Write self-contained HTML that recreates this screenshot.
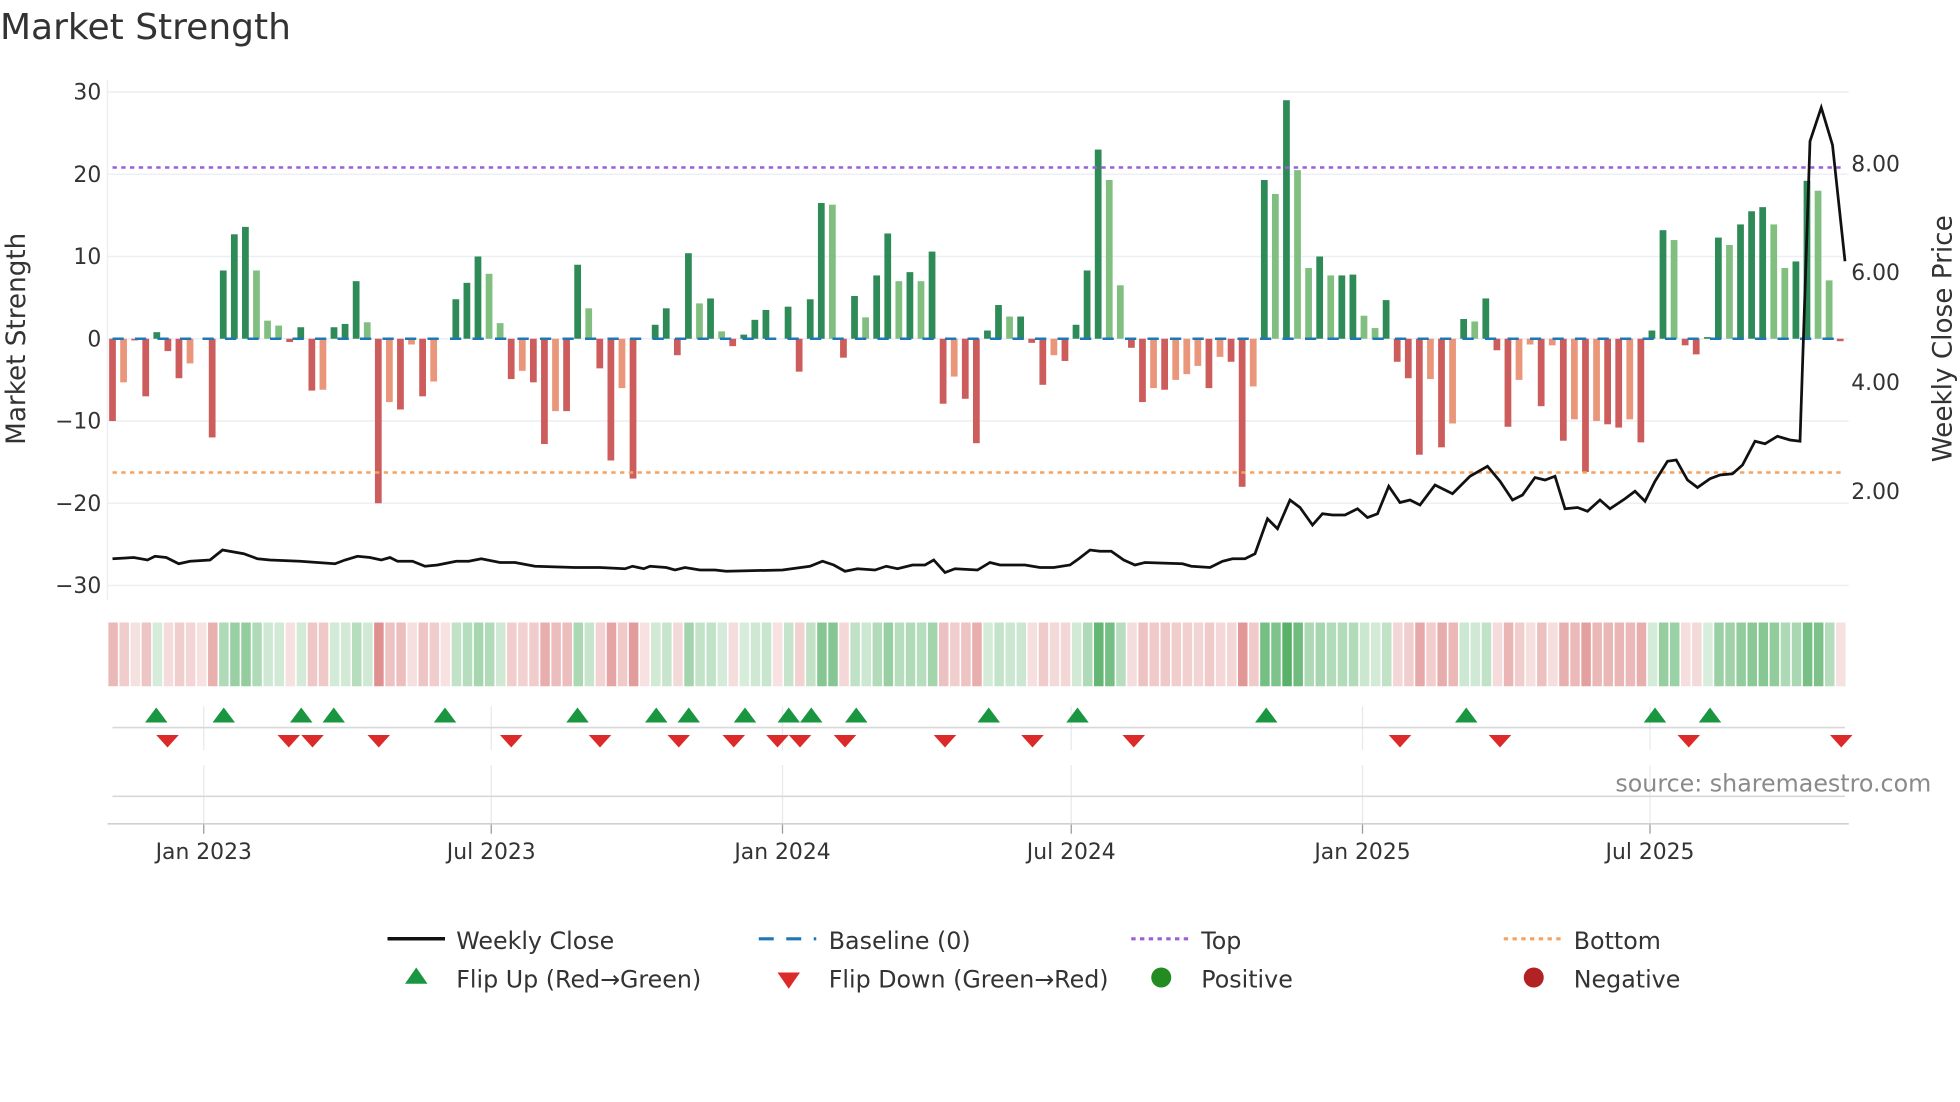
<!DOCTYPE html>
<html><head><meta charset="utf-8"><style>
html,body{margin:0;padding:0;background:#fff;overflow:hidden}
svg{display:block}
text{font-family:"DejaVu Sans","Liberation Sans",sans-serif;fill:#333}
</style></head><body>
<svg id="s" width="1960" height="1102" viewBox="0 0 1568 881.6" xmlns="http://www.w3.org/2000/svg">
<rect width="1568" height="882" fill="#fff"/>
<text x="0" y="31" font-size="28.8">Market Strength</text>
<g id="grid"></g>
<g id="bars"></g>
<g id="heat"></g>
<g id="tri"></g>
<g id="lab" font-size="17.5"></g>
<text transform="translate(20,271) rotate(-90)" text-anchor="middle" font-size="21">Market Strength</text>
<text transform="translate(1561,271) rotate(-90)" text-anchor="middle" font-size="21">Weekly Close Price</text>
<text x="1545" y="633" text-anchor="end" font-size="19" style="fill:#8a8a8a">source: sharemaestro.com</text>
<g font-size="19">
<line x1="310" y1="751" x2="356" y2="751" stroke="#111" stroke-width="2.8"/>
<text x="365" y="759">Weekly Close</text>
<line x1="607" y1="751" x2="653" y2="751" stroke="#1f77b4" stroke-width="2.5" stroke-dasharray="12,10"/>
<text x="663" y="759">Baseline (0)</text>
<line x1="905" y1="751" x2="951" y2="751" stroke="#9b5fd8" stroke-width="2.5" stroke-dasharray="3.5,3.5"/>
<text x="961" y="759">Top</text>
<line x1="1203" y1="751" x2="1249" y2="751" stroke="#f4a460" stroke-width="2.5" stroke-dasharray="3.5,3.5"/>
<text x="1259" y="759">Bottom</text>
<polygon points="333,774 342,787 324,787" fill="#1a9641"/>
<text x="365" y="790">Flip Up (Red→Green)</text>
<polygon points="622,778 640,778 631,791" fill="#dc2a2a"/>
<text x="663" y="790">Flip Down (Green→Red)</text>
<circle cx="929" cy="782" r="8" fill="#228b22"/>
<text x="961" y="790">Positive</text>
<circle cx="1227" cy="782" r="8" fill="#b22222"/>
<text x="1259" y="790">Negative</text>
</g>
</svg>
<script>
var NS="http://www.w3.org/2000/svg";
function el(p,t,a){var e=document.createElementNS(NS,t);for(var k in a)e.setAttribute(k,a[k]);document.getElementById(p).appendChild(e);return e;}
var V=[-10,-5.3,-0.2,-7,0.8,-1.5,-4.8,-3,0,-12,8.3,12.7,13.6,8.3,2.2,1.6,-0.4,1.4,-6.3,-6.2,1.4,1.8,7,2,-20,-7.7,-8.6,-0.7,-7,-5.2,0,4.8,6.8,10,7.9,1.9,-4.9,-3.9,-5.3,-12.8,-8.8,-8.8,9,3.7,-3.6,-14.8,-6,-17,0,1.7,3.7,-2,10.4,4.3,4.9,0.9,-0.9,0.5,2.3,3.5,0,3.9,-4,4.8,16.5,16.3,-2.3,5.2,2.6,7.7,12.8,7,8.1,7,10.6,-7.9,-4.6,-7.3,-12.7,1,4.1,2.7,2.7,-0.5,-5.6,-2,-2.7,1.7,8.3,23,19.3,6.5,-1.1,-7.7,-6,-6.2,-5,-4.3,-3.3,-6,-2.2,-2.8,-18,-5.8,19.3,17.6,29,20.5,8.6,10,7.7,7.7,7.8,2.8,1.3,4.7,-2.8,-4.8,-14.1,-4.9,-13.2,-10.3,2.4,2.1,4.9,-1.4,-10.7,-5,-0.7,-8.2,-0.8,-12.4,-9.8,-16.2,-10,-10.4,-10.8,-9.8,-12.6,1,13.2,12,-0.8,-1.9,0.2,12.3,11.4,13.9,15.5,16,13.9,8.6,9.4,19.2,18,7.1,-0.3];
var L={1:1,7:1,13:1,14:1,15:1,19:1,23:1,25:1,27:1,29:1,34:1,35:1,37:1,40:1,43:1,46:1,53:1,55:1,65:1,68:1,71:1,73:1,76:1,81:1,85:1,90:1,91:1,94:1,96:1,97:1,98:1,100:1,103:1,105:1,107:1,108:1,110:1,113:1,114:1,119:1,121:1,123:1,127:1,128:1,130:1,132:1,134:1,137:1,141:1,146:1,150:1,151:1,154:1,155:1};
var y0=271,k=6.58;
[30,20,10,0,-10,-20,-30].forEach(function(v){el("grid","line",{x1:86,x2:1479,y1:y0-v*k,y2:y0-v*k,stroke:"#eceff4","stroke-width":1.2});
 var t=el("lab","text",{x:81,y:y0-v*k+6,"text-anchor":"end"});t.textContent=(v<0?"\u2212"+(-v):v);});
el("grid","line",{x1:86,x2:86,y1:64,y2:480,stroke:"#eceff4","stroke-width":1.2});
[["8.00",131],["6.00",218],["4.00",306],["2.00",393]].forEach(function(a){var t=el("lab","text",{x:1481,y:a[1]+6});t.textContent=a[0];});
var mx=[[163,"Jan 2023"],[393,"Jul 2023"],[626,"Jan 2024"],[857,"Jul 2024"],[1090,"Jan 2025"],[1320,"Jul 2025"]];
mx.forEach(function(m){el("grid","line",{x1:m[0],x2:m[0],y1:565,y2:600,stroke:"#e6e9ef","stroke-width":1});
el("grid","line",{x1:m[0],x2:m[0],y1:612,y2:660,stroke:"#e6e9ef","stroke-width":1});
el("grid","line",{x1:m[0],x2:m[0],y1:659,y2:667,stroke:"#999","stroke-width":1});
var t=el("lab","text",{x:m[0],y:687,"text-anchor":"middle"});t.textContent=m[1];});
el("grid","line",{x1:90,x2:1476,y1:582,y2:582,stroke:"#d8d8d8","stroke-width":1.3});
el("grid","line",{x1:90,x2:1476,y1:637,y2:637,stroke:"#d8d8d8","stroke-width":1.3});
el("grid","line",{x1:86,x2:1479,y1:659,y2:659,stroke:"#d0d0d0","stroke-width":1.3});
var P=8.86;
V.forEach(function(v,i){var x=90+i*P,h=Math.abs(v)*k,c;
 if(v>=0)c=L[i]?"#80bf80":"#2e8b57";else c=L[i]?"#e9967a":"#cd5c5c";
 if(h>0.3)el("bars","rect",{x:x-2.7,y:v>=0?y0-h:y0,width:5.4,height:h,fill:c});
 var a=0.18+0.62*Math.min(Math.abs(v)/25,1);
 el("heat","rect",{x:x-3.3,y:498,width:7.6,height:51,fill:v>0?"#2f9e44":"#d05a5a","fill-opacity":a});
});
el("bars","line",{x1:90,x2:1476,y1:y0,y2:y0,stroke:"#1f77b4","stroke-width":2,"stroke-dasharray":"9,9"});
el("bars","line",{x1:90,x2:1476,y1:134,y2:134,stroke:"#9b5fd8","stroke-width":2,"stroke-dasharray":"3.5,3.5"});
el("bars","line",{x1:90,x2:1476,y1:378,y2:378,stroke:"#f4a460","stroke-width":2,"stroke-dasharray":"3.5,3.5"});
var pts="90,447 107,446 118,448 124,445 133,446 143,451 152,449 168,448 178,440 195,443 206,447 216,448 240,449 268,451 276,448 286,445 296,446 305,448 312,446 318,449 330,449 340,453 350,452 365,449 375,449 385,447 400,450 412,450 428,453 460,454 480,454 500,455 506,453 515,455 520,453 533,454 540,456 548,454 560,456 572,456 581,457 626,456 648,453 658,449 667,452 676,457 686,455 700,456 709,453 718,455 730,452 740,452 747,448 756,458 764,455 782,456 792,450 800,452 820,452 832,454 843,454 856,452 863,447 872,440 880,441 889,441 899,448 908,452 916,450 946,451 953,453 968,454 978,449 986,447 996,447 1004,443 1014,415 1022,423 1032,400 1040,406 1050,420 1058,411 1066,412 1076,412 1086,407 1094,414 1102,411 1111,389 1120,402 1128,400 1136,404 1148,388 1162,395 1176,381 1190,373 1200,385 1210,400 1218,396 1228,382 1236,384 1244,381 1252,407 1262,406 1270,409 1280,400 1288,407 1300,399 1308,393 1316,401 1324,385 1334,369 1341,368 1350,384 1358,390 1368,383 1376,380 1386,379 1394,372 1404,353 1412,355 1422,349 1432,352 1440,353 1448,113 1457,86 1466,116 1476,209";
el("bars","polyline",{points:pts,fill:"none",stroke:"#111","stroke-width":2.2,"stroke-linejoin":"miter"});
[125,179,241,267,356,462,525,551,596,631,649,685,791,862,1013,1173,1324,1368].forEach(function(x){el("tri","polygon",{points:(x)+",566 "+(x+9)+",578 "+(x-9)+",578",fill:"#1a9641"});});
[134,231,250,303,409,480,543,587,622,640,676,756,826,907,1120,1200,1351,1473].forEach(function(x){el("tri","polygon",{points:(x-9)+",588 "+(x+9)+",588 "+x+",598",fill:"#dc2a2a"});});
</script>
</body></html>
